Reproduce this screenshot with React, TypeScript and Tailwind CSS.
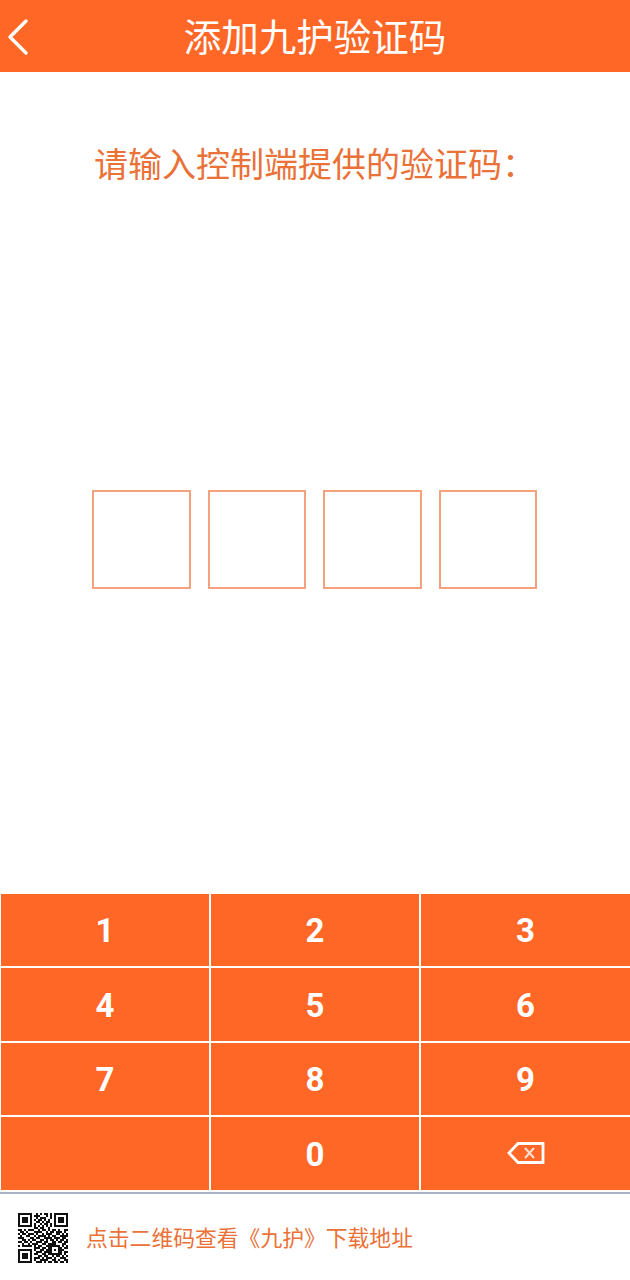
import React from 'react';

const cjk = 'font-["Noto_Sans_CJK_SC","Noto_Sans",sans-serif]';

const keys = ['1', '2', '3', '4', '5', '6', '7', '8', '9', '', '0', 'del'];

// rough copy of the small qr code, 25 x 25 modules
const qrRows = [
  '1111111001010110101111111',
  '1000001011100010101000001',
  '1011101001011100101011101',
  '1011101010110101001011101',
  '1011101001101011001011101',
  '1000001010010110101000001',
  '1111111010101010101111111',
  '0000000011011001000000000',
  '1101011100101101011010011',
  '0110100011110010110111010',
  '1011011101001011100110101',
  '0100110010111101011001111',
  '1110001101100111101110110',
  '0011010110011010110101101',
  '1101101001110110011011011',
  '0010010111001101111000110',
  '1011111010110011111110101',
  '0000000011101101100011011',
  '1111111010011011101011100',
  '1000001001110111100011011',
  '1011101011001101111111010',
  '1011101000110110010110101',
  '1011101011101011101001110',
  '1000001010011110011010011',
  '1111111001110101101101101',
];

function QrCode() {
  return (
    <svg width="50" height="50" viewBox="0 0 25 25" shapeRendering="crispEdges" className="shrink-0 blur-[0.4px]">
      {qrRows.map((row, y) =>
        row.split('').map((c, x) =>
          c === '1' ? <rect key={`${x}-${y}`} x={x} y={y} width="1" height="1" fill="#111" /> : null
        )
      )}
    </svg>
  );
}

function BackspaceIcon() {
  return (
    <svg width="38" height="22" viewBox="0 0 38 22" fill="none" stroke="white" strokeWidth="2.8" className="-mt-[3px]">
      <path d="M11 1.5H36V20.5H11L2 11Z" strokeLinejoin="miter" />
      <path d="M18 6L27 16M27 6L18 16" strokeWidth="2" stroke="#ffe0d0" />
    </svg>
  );
}

export default function App() {
  return (
    <div className={`w-[630px] h-[1280px] bg-white flex flex-col overflow-hidden ${cjk}`}>
      <header className="h-[72px] shrink-0 bg-[#ff6727] flex items-center relative">
        <svg width="24" height="38" viewBox="0 0 24 38" fill="none" className="absolute left-[6px] top-[18px]">
          <path d="M20 3L4 19L20 35" stroke="white" strokeWidth="3.4" strokeLinecap="round" strokeLinejoin="round" />
        </svg>
        <h1 className="w-full text-center pb-[2px] text-[37.5px] leading-none text-white">添加九护验证码</h1>
      </header>

      <p className="mt-[69px] pl-[94px] text-[34px] leading-[44px] text-[#ea7137]">请输入控制端提供的验证码：</p>

      <div className="mt-[305px] pl-[92px] flex gap-[17px]">
        {[0, 1, 2, 3].map(i => (
          <div key={i} className="w-[98.5px] h-[99px] border-2 border-[#f3a27d]" />
        ))}
      </div>

      <div className="mt-[305px] grid grid-cols-[208px_208px_209px] grid-rows-[72px_73px_72px_73px] gap-[2px] pl-px">
        {keys.map((k, i) => (
          <div key={i} className="bg-[#ff6727] flex items-center justify-center pt-[2px] text-white text-[33px] font-bold font-['Roboto',sans-serif]">
            {k === 'del' ? <BackspaceIcon /> : k}
          </div>
        ))}
      </div>

      <div className="mt-[2px] h-[2px] bg-[#a9b2c4]" />

      <div className="flex items-center pl-[18px] pt-[19px]">
        <QrCode />
        <span className="ml-[18px] mb-[2px] text-[21.8px] leading-none text-[#ea7137]">点击二维码查看《九护》下载地址</span>
      </div>
    </div>
  );
}
